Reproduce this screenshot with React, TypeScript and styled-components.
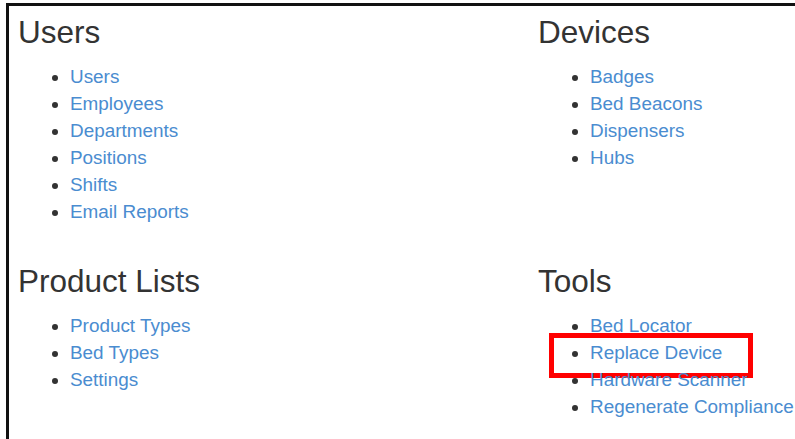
import React from "react";
import styled, { createGlobalStyle } from "styled-components";

const GlobalStyle = createGlobalStyle`
  html, body {
    margin: 0;
    padding: 0;
    background: #ffffff;
    overflow: hidden;
  }
  body {
    font-family: "Liberation Sans", Arial, sans-serif;
    color: #333333;
  }
`;

type Link = { label: string; marked?: boolean };
type Section = { title: string; links: Link[] };

const sections: Section[] = [
  {
    title: "Users",
    links: [
      { label: "Users" },
      { label: "Employees" },
      { label: "Departments" },
      { label: "Positions" },
      { label: "Shifts" },
      { label: "Email Reports" },
    ],
  },
  {
    title: "Devices",
    links: [{ label: "Badges" }, { label: "Bed Beacons" }, { label: "Dispensers" }, { label: "Hubs" }],
  },
  {
    title: "Product Lists",
    links: [{ label: "Product Types" }, { label: "Bed Types" }, { label: "Settings" }],
  },
  {
    title: "Tools",
    links: [
      { label: "Bed Locator" },
      { label: "Replace Device", marked: true },
      { label: "Hardware Scanner" },
      { label: "Regenerate Compliance" },
    ],
  },
];

export default function App() {
  return (
    <>
      <GlobalStyle />
      <Frame>
        <Grid>
          {sections.map((s) => (
            <Block key={s.title}>
              <Heading>{s.title}</Heading>
              <List>
                {s.links.map((l) => (
                  <Item key={l.label}>
                    <Anchor href="#">{l.label}</Anchor>
                    {l.marked && <Highlight />}
                  </Item>
                ))}
              </List>
            </Block>
          ))}
        </Grid>
      </Frame>
    </>
  );
}

const Frame = styled.div`
  box-sizing: border-box;
  height: calc(100vh - 3px);
  margin: 3px 0 0 6px;
  border-top: 3px solid #111111;
  border-left: 3px solid #111111;
  padding: 9px 0 0 9px;
  overflow: hidden;
`;

const Grid = styled.div`
  display: grid;
  grid-template-columns: 520px 1fr;
  row-gap: 39px;
`;

const Block = styled.div`
  white-space: nowrap;
`;

const Heading = styled.h2`
  margin: 0;
  font-size: 31.5px;
  line-height: 1.1;
  font-weight: 400;
  color: #333333;
`;

const List = styled.ul`
  margin: 13.5px 0 0;
  padding-left: 52px;
  font-size: 18.9px;
  line-height: 27px;
  list-style: disc;
`;

const Item = styled.li`
  position: relative;
`;

const Anchor = styled.a`
  color: #4a8cd0;
  text-decoration: none;
`;

const Highlight = styled.span`
  position: absolute;
  left: -41px;
  top: -6px;
  width: 204px;
  height: 45px;
  box-sizing: border-box;
  border: 5px solid #ff0000;
  pointer-events: none;
`;
